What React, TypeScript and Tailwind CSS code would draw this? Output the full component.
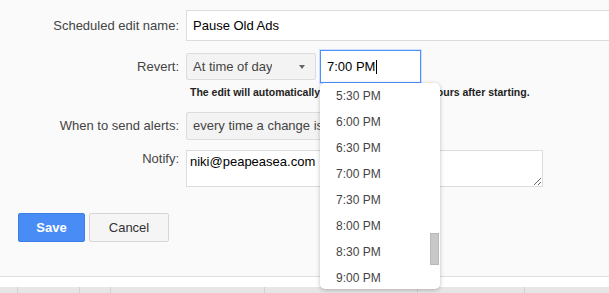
import { ReactElement } from "react"

const LABEL_CLASSNAME = 'w-[179px] shrink-0 text-right text-[13px] text-[#444]'
const TIMES = ['5:30 PM', '6:00 PM', '6:30 PM', '7:00 PM', '7:30 PM', '8:00 PM', '8:30 PM', '9:00 PM']
const BAR_CELLS = ['w-[17px]', 'w-[62px] border-l', 'w-[31px] border-l', 'w-[154px] border-l', 'w-[153px] border-l', 'w-[107px] border-l', 'flex-1 border-l']

const SelectBox = ({ text, className }: { text: string, className: string }): ReactElement => {
    return (
        <div className={`flex items-center justify-between px-[6px] bg-[#f3f3f3] border border-[#dcdcdc] rounded-[2px] text-[13px] text-[#444] ${className}`}>
            <span className="whitespace-nowrap overflow-hidden">{text}</span>
            <span className="mr-[4px] w-0 h-0 border-x-[3px] border-x-transparent border-t-[4px] border-t-[#666]" />
        </div>
    )
}

const App = (): ReactElement => {
    return (
        <div className="relative w-[609px] h-[293px] overflow-hidden bg-[#fafafa] font-['Liberation_Sans',Arial,sans-serif] flex flex-col">
            <div className="h-[276px] pt-[10px] flex flex-col">
                {/* name */}
                <div className="flex items-center gap-x-[7px]">
                    <label className={LABEL_CLASSNAME}>Scheduled edit name:</label>
                    <div className="shrink-0 w-[460px] h-[31px] flex items-center px-[6px] bg-white border border-[#dcdcdc] text-[13px] text-black">Pause Old Ads</div>
                </div>

                {/* revert */}
                <div className="flex items-center gap-x-[7px] mt-[9px] h-[33px]">
                    <label className={LABEL_CLASSNAME}>Revert:</label>
                    <div className="flex items-center gap-x-[4px]">
                        <SelectBox text="At time of day" className="w-[130px] h-[27px]" />
                        <div className="relative">
                            <div className="w-[101px] h-[33px] flex items-center px-[6px] bg-white border border-[#4d90fe] shadow-[0_0_0_1px_rgba(77,144,254,0.25)] text-[13px] text-black">
                                <span>7:00 PM</span>
                                <span className="ml-[1px] w-px h-[14px] bg-black" />
                            </div>

                            {/* time dropdown */}
                            <div className="absolute z-10 left-0 top-[33px] w-[120px] h-[206px] overflow-hidden bg-white rounded-[5px] shadow-[0_1px_4px_rgba(0,0,0,0.25)]">
                                <div className="flex flex-col">
                                    {TIMES.map((t) => (
                                        <div key={t} className="h-[26px] flex items-center pl-[16px] text-[12px] text-[#444]">{t}</div>
                                    ))}
                                </div>
                                <div className="absolute right-px top-[150px] w-[9px] h-[32px] bg-[#c8c8c8] border border-[#b8b8b8]" />
                            </div>
                        </div>
                    </div>
                </div>

                <div className="ml-[190px] mt-[3px] text-[10.5px] font-bold text-[#222] whitespace-nowrap leading-[13px]">
                    The edit will automatically revert at 7:00 PM, 2.5 hours after starting.
                </div>

                {/* alerts */}
                <div className="flex items-center gap-x-[7px] mt-[13px]">
                    <label className={LABEL_CLASSNAME}>When to send alerts:</label>
                    <SelectBox text="every time a change is applied" className="w-[220px] h-[28px]" />
                </div>

                {/* notify */}
                <div className="flex items-start gap-x-[7px] mt-[10px]">
                    <label className={`${LABEL_CLASSNAME} leading-[15px] pt-[1px]`}>Notify:</label>
                    <textarea
                        defaultValue="niki@peapeasea.com"
                        className="w-[357px] h-[37px] px-[3px] pt-[3px] bg-white border border-[#dcdcdc] text-[13px] leading-[15px] text-black resize outline-none"
                    />
                </div>

                <div className="flex gap-x-[4px] ml-[18px] mt-[26px]">
                    <button className="w-[67px] h-[29px] bg-[#4a8cf5] border border-[#3d7fe8] rounded-[2px] text-white font-bold text-[13px]">Save</button>
                    <button className="w-[80px] h-[29px] bg-[#f5f5f5] border border-[#d6d6d6] rounded-[2px] text-[#333] text-[13px]">Cancel</button>
                </div>
            </div>

            <div className="h-px bg-[#e0e0e0]" />
            <div className="h-[10px] bg-white" />
            <div className="flex-1 flex bg-[#e6e6e6]">
                {BAR_CELLS.map((c, i) => (
                    <div key={i} className={`${c} border-[#d2d2d2]`} />
                ))}
            </div>
        </div>
    )
}

export default App
